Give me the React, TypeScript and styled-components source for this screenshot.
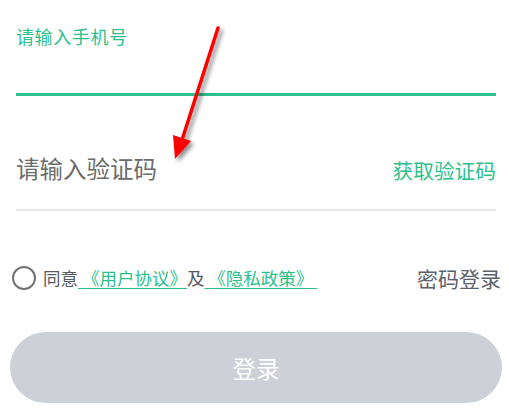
import React from "react";
import styled, { createGlobalStyle } from "styled-components";

const Global = createGlobalStyle`
  html, body { margin: 0; padding: 0; background: #fff; }
  body { font-family: "Noto Sans CJK SC", "Noto Sans", sans-serif; }
  * { box-sizing: border-box; }
`;

const GREEN = "#2dbf8c";

const Page = styled.div`
  position: relative;
  width: 509px;
  height: 408px;
  overflow: hidden;
  background: #fff;
`;

const Form = styled.div`
  display: flex;
  flex-direction: column;
  padding: 27px 0 0;
`;

const PhoneField = styled.div`
  margin: 0 13px 0 16px;
  height: 69px;
  border-bottom: 3px solid ${GREEN};
`;

const FloatLabel = styled.div`
  font-size: 18px;
  line-height: 18px;
  color: ${GREEN};
  letter-spacing: 0.6px;
`;

const CodeField = styled.div`
  margin: 0 13px 0 16px;
  padding: 50px 0 19px;
  display: flex;
  align-items: center;
  justify-content: space-between;
  border-bottom: 2px solid #e3e5ea;
`;

const Placeholder = styled.div`
  height: 44px;
  display: flex;
  align-items: center;
  font-size: 23.5px;
  color: #6b6b6b;
`;

const GetCode = styled.button`
  border: none;
  background: none;
  padding: 0;
  margin-top: 4px;
  font-family: inherit;
  font-size: 20.7px;
  color: ${GREEN};
`;

const AgreeRow = styled.div`
  margin: 55px 8px 0 12px;
  height: 24px;
  display: flex;
  align-items: center;
  justify-content: space-between;
`;

const AgreeLeft = styled.div`
  display: flex;
  align-items: center;
`;

const Radio = styled.span`
  width: 24px;
  height: 24px;
  border-radius: 50%;
  border: 2.5px solid #727272;
  margin-right: 7px;
`;

const AgreeText = styled.span`
  font-size: 17.5px;
  line-height: 24px;
  color: #555a63;
  white-space: pre;
`;

const Link = styled.a`
  color: ${GREEN};
  text-decoration: underline;
  text-underline-offset: 3px;
  text-decoration-thickness: 1px;
`;

const PwdLogin = styled.span`
  font-size: 21px;
  line-height: 24px;
  color: #5d616b;
`;

const LoginButton = styled.button`
  margin: 42px 7px 0 10px;
  height: 71px;
  border: none;
  border-radius: 36px;
  background: #cdd0d7;
  color: #fff;
  font-family: inherit;
  font-size: 23.5px;
`;

const ArrowSvg = styled.svg`
  position: absolute;
  left: 0;
  top: 0;
  pointer-events: none;
`;

function Arrow() {
  return (
    <ArrowSvg width="509" height="408" viewBox="0 0 509 408">
      <defs>
        <filter id="sh" x="-50%" y="-50%" width="200%" height="200%">
          <feDropShadow dx="3" dy="3" stdDeviation="2.2" floodColor="#000" floodOpacity="0.45" />
        </filter>
      </defs>
      <g filter="url(#sh)">
        <line x1="218" y1="28" x2="182" y2="140" stroke="#ff0000" strokeWidth="3.5" strokeLinecap="round" />
        <polygon points="175,159 173,135 191,141" fill="#ff0000" />
      </g>
    </ArrowSvg>
  );
}

export default function App() {
  return (
    <Page>
      <Global />
      <Form>
        <PhoneField>
          <FloatLabel>请输入手机号</FloatLabel>
        </PhoneField>
        <CodeField>
          <Placeholder>请输入验证码</Placeholder>
          <GetCode>获取验证码</GetCode>
        </CodeField>
        <AgreeRow>
          <AgreeLeft>
            <Radio />
            <AgreeText>
              同意<Link> 《用户协议》</Link>及<Link> 《隐私政策》 </Link>
            </AgreeText>
          </AgreeLeft>
          <PwdLogin>密码登录</PwdLogin>
        </AgreeRow>
        <LoginButton>登录</LoginButton>
      </Form>
      <Arrow />
    </Page>
  );
}
